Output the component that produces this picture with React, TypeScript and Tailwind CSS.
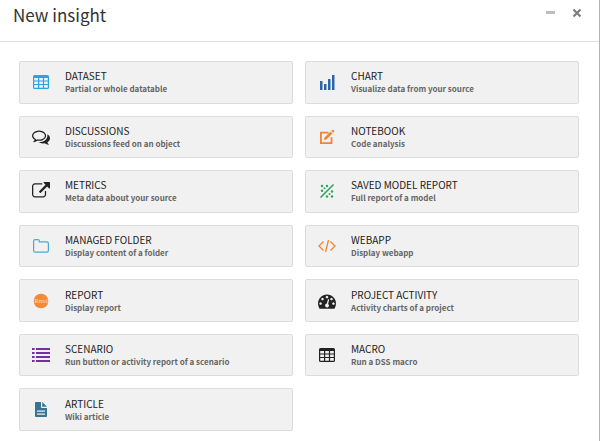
import type { ReactNode } from 'react';

interface InsightType {
  title: string;
  description: string;
  icon: ReactNode;
}

const TableIcon = ({ className }: { className: string }) => (
  <svg viewBox="0 0 16 14" className={`h-[14px] w-4 ${className}`} fill="currentColor" aria-hidden="true">
    <path
      fillRule="evenodd"
      d="M1.5 0h13A1.5 1.5 0 0 1 16 1.5v11a1.5 1.5 0 0 1-1.5 1.5h-13A1.5 1.5 0 0 1 0 12.5v-11A1.5 1.5 0 0 1 1.5 0zM1.2 3v2.5H5V3zM6.2 3v2.5h3.7V3zM11.1 3v2.5h3.7V3zM1.2 6.5V9H5V6.5zM6.2 6.5V9h3.7V6.5zM11.1 6.5V9h3.7V6.5zM1.2 10.1v2.3q0 .4.4.4H5v-2.7zM6.2 10.1v2.7h3.7v-2.7zM11.1 10.1v2.7h3.3q.4 0 .4-.4v-2.3z"
    />
  </svg>
);

const ChartIcon = () => (
  <svg viewBox="0 0 16 16" className="h-4 w-4 text-[#2c66a8]" fill="currentColor" aria-hidden="true">
    <path d="M1 7h2.5v9H1zM5 10h2.5v6H5zM9 5h2.5v11H9zM13 1h2.5v15H13z" />
  </svg>
);

const CommentsIcon = () => (
  <svg viewBox="0 0 1792 1792" className="h-[18px] w-[18px] text-[#222]" fill="currentColor" aria-hidden="true">
    <path d="M704 384q-153 0-286 52t-211.5 141-78.5 191q0 82 53 158t149 132l97 56-35 84q34-20 62-39l44-31 53 10q78 14 153 14 153 0 286-52t211.5-141 78.5-191-78.5-191-211.5-141-286-52zm0-128q191 0 353.5 68.5t256.5 186.5 94 257-94 257-256.5 186.5-353.5 68.5q-86 0-176-16-124 88-278 128-36 9-86 16h-3q-11 0-20.5-8t-11.5-21q-1-3-1-6.5t.5-6.5 2-6l2.5-5 3.5-5.5 4-5 4.5-5 4-4.5q5-6 23-25t26-29.5 22.5-29 25-38.5 20.5-44q-124-72-195-177t-71-224q0-139 94-257t256.5-186.5 353.5-68.5zm822 1169q10 24 20.5 44t25 38.5 22.5 29 26 29.5 23 25q1 1 4 4.5t4.5 5 4 5 3.5 5.5l2.5 5 2 6 .5 6.5-1 6.5q-3 14-13 22t-22 7q-50-7-86-16-154-40-278-128-90 16-176 16-271 0-472-132 58 4 88 4 161 0 309-45t264-129q125-92 192-212t67-254q0-77-23-152 129 71 204 178t75 230q0 120-71 224.5t-195 176.5z" />
  </svg>
);

const NotebookIcon = () => (
  <svg viewBox="0 0 16 16" className="h-4 w-4 text-[#f28532]" aria-hidden="true">
    <path d="M9.5 3.7H1.9v10.5h10.6V8.2" fill="none" stroke="currentColor" strokeWidth="1.8" />
    <path d="M5.5 8.6 11.6 2.5l1.9 1.9-6.1 6.1-2.5.6zM12.3 1.8l.9-.9q.6-.5 1.2 0l.7.7q.5.6 0 1.2l-.9.9z" fill="currentColor" />
  </svg>
);

const ExternalIcon = () => (
  <svg viewBox="0 0 1792 1792" className="h-[18px] w-[18px] text-[#222]" fill="currentColor" aria-hidden="true">
    <path d="M1408 928v320q0 119-84.5 203.5t-203.5 84.5h-832q-119 0-203.5-84.5t-84.5-203.5v-832q0-119 84.5-203.5t203.5-84.5h704q14 0 23 9t9 23v64q0 14-9 23t-23 9h-704q-66 0-113 47t-47 113v832q0 66 47 113t113 47h832q66 0 113-47t47-113v-320q0-14 9-23t23-9h64q14 0 23 9t9 23zm384-864v512q0 26-19 45t-45 19-45-19l-176-176-652 652q-10 10-23 10t-23-10l-114-114q-10-10-10-23t10-23l652-652-176-176q-19-19-19-45t19-45 45-19h512q26 0 45 19t19 45z" />
  </svg>
);

const ModelIcon = () => (
  <svg viewBox="0 0 16 16" className="h-4 w-4 text-[#2fa558]" fill="currentColor" aria-hidden="true">
    <path d="M1.5 14.5 14.5 1.5" stroke="currentColor" strokeWidth="1.6" />
    <circle cx="3" cy="3" r="1.2" />
    <circle cx="8" cy="3" r="1.2" />
    <circle cx="3" cy="7.7" r="1.2" />
    <circle cx="5.5" cy="5.3" r="1" />
    <circle cx="13" cy="8.5" r="1.2" />
    <circle cx="10.5" cy="11" r="1" />
    <circle cx="8" cy="13.5" r="1.2" />
    <circle cx="13" cy="13.5" r="1.2" />
  </svg>
);

const FolderIcon = () => (
  <svg viewBox="0 0 16 14" className="h-[14px] w-4 text-[#45a9dd]" fill="none" stroke="currentColor" aria-hidden="true">
    <path d="M.6 11.6V2.2Q.6.6 2.2.6h2.6q1.6 0 1.6 1.6v.6h7.4q1.6 0 1.6 1.6v7.2q0 1.6-1.6 1.6H2.2Q.6 13.2.6 11.6z" strokeWidth="1.2" />
  </svg>
);

const CodeIcon = () => (
  <svg viewBox="0 0 18 14" className="h-[14px] w-[18px] text-[#f28532]" fill="none" stroke="currentColor" aria-hidden="true">
    <path d="M5.5 2.5 1 7l4.5 4.5M12.5 2.5 17 7l-4.5 4.5M10.5 1l-3 12" strokeWidth="1.3" />
  </svg>
);

const RmdIcon = () => (
  <svg viewBox="0 0 16 16" className="h-4 w-4" aria-hidden="true">
    <circle cx="8" cy="8" r="7.3" fill="#f58a33" />
    <text x="8" y="10.3" textAnchor="middle" fontSize="7" fill="#fbd9bd" fontFamily="Liberation Serif, serif">
      Rmd
    </text>
  </svg>
);

const DashboardIcon = () => (
  <svg viewBox="0 0 1792 1792" className="h-[18px] w-[18px] text-[#222]" fill="currentColor" aria-hidden="true">
    <path d="M384 1152q0-53-37.5-90.5t-90.5-37.5-90.5 37.5-37.5 90.5 37.5 90.5 90.5 37.5 90.5-37.5 37.5-90.5zm192-448q0-53-37.5-90.5t-90.5-37.5-90.5 37.5-37.5 90.5 37.5 90.5 90.5 37.5 90.5-37.5 37.5-90.5zm428 481l101-382q6-26-7.5-48.5t-38.5-29.5-48 6.5-30 39.5l-101 382q-60 5-107 43.5t-63 98.5q-20 77 20 146t117 89 146-20 89-117q16-60-6-117t-72-91zm660-33q0-53-37.5-90.5t-90.5-37.5-90.5 37.5-37.5 90.5 37.5 90.5 90.5 37.5 90.5-37.5 37.5-90.5zm-640-640q0-53-37.5-90.5t-90.5-37.5-90.5 37.5-37.5 90.5 37.5 90.5 90.5 37.5 90.5-37.5 37.5-90.5zm448 192q0-53-37.5-90.5t-90.5-37.5-90.5 37.5-37.5 90.5 37.5 90.5 90.5 37.5 90.5-37.5 37.5-90.5zm320 448q0 261-141 483-19 29-54 29h-1402q-35 0-54-29-141-221-141-483 0-182 71-348t191-286 286-191 348-71 348 71 286 191 191 286 71 348z" />
  </svg>
);

const ListIcon = () => (
  <svg viewBox="0 0 18 14" className="h-[14px] w-[18px] text-[#7330a3]" fill="currentColor" aria-hidden="true">
    <path d="M0 0h2.6v2H0zM4 0h14v2H4zM0 4h2.6v2H0zM4 4h14v2H4zM0 8h2.6v2H0zM4 8h14v2H4zM0 12h2.6v2H0zM4 12h14v2H4z" />
  </svg>
);

const ArticleIcon = () => (
  <svg viewBox="0 0 12 15" className="h-[15px] w-3 text-[#377494]" fill="currentColor" aria-hidden="true">
    <path fillRule="evenodd" d="M0 .8Q0 0 .8 0H6v5.2q0 .8.8.8H12v8.2q0 .8-.8.8H.8Q0 15 0 14.2zM2 8.5v1.2h8V8.5zM2 11.5v1.2h8v-1.2z" />
    <path d="M7.2 0 12 4.8H7.2z" />
  </svg>
);

const insightTypes: InsightType[] = [
  { title: 'DATASET', description: 'Partial or whole datatable', icon: <TableIcon className="text-[#28a5e0]" /> },
  { title: 'CHART', description: 'Visualize data from your source', icon: <ChartIcon /> },
  { title: 'DISCUSSIONS', description: 'Discussions feed on an object', icon: <CommentsIcon /> },
  { title: 'NOTEBOOK', description: 'Code analysis', icon: <NotebookIcon /> },
  { title: 'METRICS', description: 'Meta data about your source', icon: <ExternalIcon /> },
  { title: 'SAVED MODEL REPORT', description: 'Full report of a model', icon: <ModelIcon /> },
  { title: 'MANAGED FOLDER', description: 'Display content of a folder', icon: <FolderIcon /> },
  { title: 'WEBAPP', description: 'Display webapp', icon: <CodeIcon /> },
  { title: 'REPORT', description: 'Display report', icon: <RmdIcon /> },
  { title: 'PROJECT ACTIVITY', description: 'Activity charts of a project', icon: <DashboardIcon /> },
  { title: 'SCENARIO', description: 'Run button or activity report of a scenario', icon: <ListIcon /> },
  { title: 'MACRO', description: 'Run a DSS macro', icon: <TableIcon className="text-[#222]" /> },
  { title: 'ARTICLE', description: 'Wiki article', icon: <ArticleIcon /> },
];

export default function App() {
  return (
    <div className="flex min-h-screen flex-col border-r border-[#b4b4b4] bg-white font-['Noto_Sans_CJK_SC',sans-serif]">
      <header className="flex items-start justify-between border-b border-[#dedede] pt-[3px] pr-[17px] pb-[14px] pl-[13px]">
        <h1 className="text-[17px] leading-6 text-[#333]">New insight</h1>
        <div className="flex gap-4 pt-[5px]">
          <button type="button" aria-label="Minimize" className="flex h-[10px] w-[10px] items-center justify-center text-[#bdbdbd]">
            <svg viewBox="0 0 10 10" className="h-[10px] w-[10px]" fill="currentColor" aria-hidden="true">
              <path d="M0 3h9v3H0z" />
            </svg>
          </button>
          <button type="button" aria-label="Close" className="flex h-[10px] w-[10px] items-center justify-center text-[#7d7d7d]">
            <svg viewBox="0 0 10 10" className="h-[10px] w-[10px]" fill="none" stroke="currentColor" strokeWidth="2.2" aria-hidden="true">
              <path d="M1.5 1.5l7 7M8.5 1.5l-7 7" />
            </svg>
          </button>
        </div>
      </header>

      <main className="grid flex-1 auto-rows-fr grid-cols-2 gap-3 pt-[19px] pr-5 pb-[10px] pl-[19px]">
        {insightTypes.map((insight) => (
          <button
            key={insight.title}
            type="button"
            className="flex items-center gap-[3px] rounded-xs border border-[#dcdcdc] bg-[#f1f1f1] text-left hover:bg-[#e9e9e9]"
          >
            <span className="flex w-[42px] shrink-0 justify-center">{insight.icon}</span>
            <span className="flex flex-col">
              <span className="text-[10px] leading-[14px] text-[#222]">{insight.title}</span>
              <span className="text-[8px] leading-3 font-bold text-[#666]">{insight.description}</span>
            </span>
          </button>
        ))}
      </main>
    </div>
  );
}
